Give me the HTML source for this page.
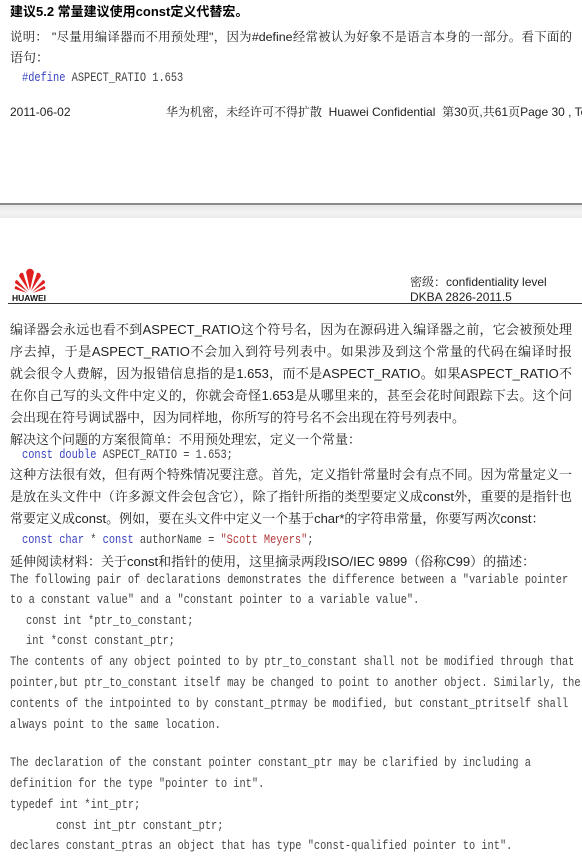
<!DOCTYPE html>
<html><head><meta charset="utf-8"><style>
html,body{margin:0;padding:0;background:#fff;}
body{width:582px;height:861px;position:relative;overflow:hidden;}
.l{position:absolute;left:10px;white-space:nowrap;font-family:"Liberation Sans","Noto Serif CJK SC",serif;font-size:13px;line-height:18px;color:#222;}
.j{width:562px;text-align:justify;text-align-last:justify;white-space:normal;height:18px;overflow:hidden;}
.c{font-family:"Liberation Mono","Noto Serif CJK SC",monospace;font-size:13px;color:#444;transform:scaleX(0.795);transform-origin:0 0;}
.k{color:#3a44c0;}
.s{color:#b03a3a;}
</style></head><body>
<div class="l" style="top:3px;font-weight:bold;font-size:13px;font-family:'Liberation Sans','Noto Sans CJK SC',sans-serif;color:#000">建议5.2 常量建议使用const定义代替宏。</div>
<div class="l j" style="top:28px;font-size:12.4px">说明： "尽量用编译器而不用预处理"，因为#define经常被认为好象不是语言本身的一部分。看下面的</div>
<div class="l" style="top:49px">语句：</div>
<div class="l c" style="top:69px;left:22px"><span class="k">#define</span> ASPECT_RATIO 1.653</div>
<div class="l" style="top:103px;font-size:12px">2011-06-02</div>
<div class="l" style="top:103px;left:166px;font-size:12px">华为机密，未经许可不得扩散&nbsp;&nbsp;Huawei Confidential&nbsp;&nbsp;第30页,共61页Page 30 , Total</div>

<div style="position:absolute;left:0;top:203px;width:582px;height:2px;background:#8a8a8a"></div>
<div style="position:absolute;left:0;top:205px;width:582px;height:13px;background:linear-gradient(#e6e6e6,#f3f3f3 50%,#ececec)"></div>

<svg style="position:absolute;left:12px;top:268px" width="36" height="26" viewBox="0 0 36 26">
<g fill="#e02020">
<path d="M18 22 L14 4 Q16 0 18 1 Q20 0 22 4 Z" />
<path d="M17 23 L7 8 Q8 4 11 5 Z"/>
<path d="M19 23 L29 8 Q28 4 25 5 Z"/>
<path d="M16 24 L3 15 Q3 12 5 12 Z"/>
<path d="M20 24 L33 15 Q33 12 31 12 Z"/>
<path d="M15 25 L3 21 Q2 19 4 18 Z"/>
<path d="M21 25 L33 21 Q34 19 32 18 Z"/>
</g></svg>
<div class="l" style="top:294px;left:12px;font-size:8.5px;line-height:9px;font-weight:bold;color:#111">HUAWEI</div>
<div class="l" style="top:275px;left:410px;font-size:12px;line-height:14px">密级：confidentiality level</div>
<div class="l" style="top:290px;left:410px;font-size:12px;line-height:14px">DKBA 2826-2011.5</div>
<div style="position:absolute;left:8px;top:303px;width:574px;height:1px;background:#333"></div>

<div class="l j" style="top:321px">编译器会永远也看不到ASPECT_RATIO这个符号名，因为在源码进入编译器之前，它会被预处理程</div>
<div class="l j" style="top:343px">序去掉，于是ASPECT_RATIO不会加入到符号列表中。如果涉及到这个常量的代码在编译时报错，</div>
<div class="l j" style="top:365px">就会很令人费解，因为报错信息指的是1.653，而不是ASPECT_RATIO。如果ASPECT_RATIO不是</div>
<div class="l j" style="top:387px">在你自己写的头文件中定义的，你就会奇怪1.653是从哪里来的，甚至会花时间跟踪下去。这个问题也</div>
<div class="l" style="top:409px">会出现在符号调试器中，因为同样地，你所写的符号名不会出现在符号列表中。</div>
<div class="l" style="top:431px">解决这个问题的方案很简单：不用预处理宏，定义一个常量：</div>
<div class="l c" style="top:446px;left:22px"><span class="k">const double</span> ASPECT_RATIO = 1.653;</div>
<div class="l j" style="top:466px">这种方法很有效，但有两个特殊情况要注意。首先，定义指针常量时会有点不同。因为常量定义一般</div>
<div class="l j" style="top:488px">是放在头文件中（许多源文件会包含它），除了指针所指的类型要定义成const外，重要的是指针也经</div>
<div class="l" style="top:510px">常要定义成const。例如，要在头文件中定义一个基于char*的字符串常量，你要写两次const：</div>
<div class="l c" style="top:531px;left:22px"><span class="k">const char</span> * <span class="k">const</span> authorName = <span class="s">"Scott Meyers"</span>;</div>
<div class="l" style="top:553px">延伸阅读材料：关于const和指针的使用，这里摘录两段ISO/IEC 9899（俗称C99）的描述：</div>
<div class="l c" style="top:571px">The following pair of declarations demonstrates the difference between a "variable pointer</div>
<div class="l c" style="top:591px">to a constant value" and a "constant pointer to a variable value".</div>
<div class="l c" style="top:612px;left:26px">const int *ptr_to_constant;</div>
<div class="l c" style="top:632px;left:26px">int *const constant_ptr;</div>
<div class="l c" style="top:653px">The contents of any object pointed to by ptr_to_constant shall not be modified through that</div>
<div class="l c" style="top:674px">pointer,but ptr_to_constant itself may be changed to point to another object. Similarly, the</div>
<div class="l c" style="top:695px">contents of the intpointed to by constant_ptrmay be modified, but constant_ptritself shall</div>
<div class="l c" style="top:716px">always point to the same location.</div>
<div class="l c" style="top:754px">The declaration of the constant pointer constant_ptr may be clarified by including a</div>
<div class="l c" style="top:775px">definition for the type "pointer to int".</div>
<div class="l c" style="top:796px">typedef int *int_ptr;</div>
<div class="l c" style="top:817px;left:56px">const int_ptr constant_ptr;</div>
<div class="l c" style="top:837px">declares constant_ptras an object that has type "const-qualified pointer to int".</div>
</body></html>
